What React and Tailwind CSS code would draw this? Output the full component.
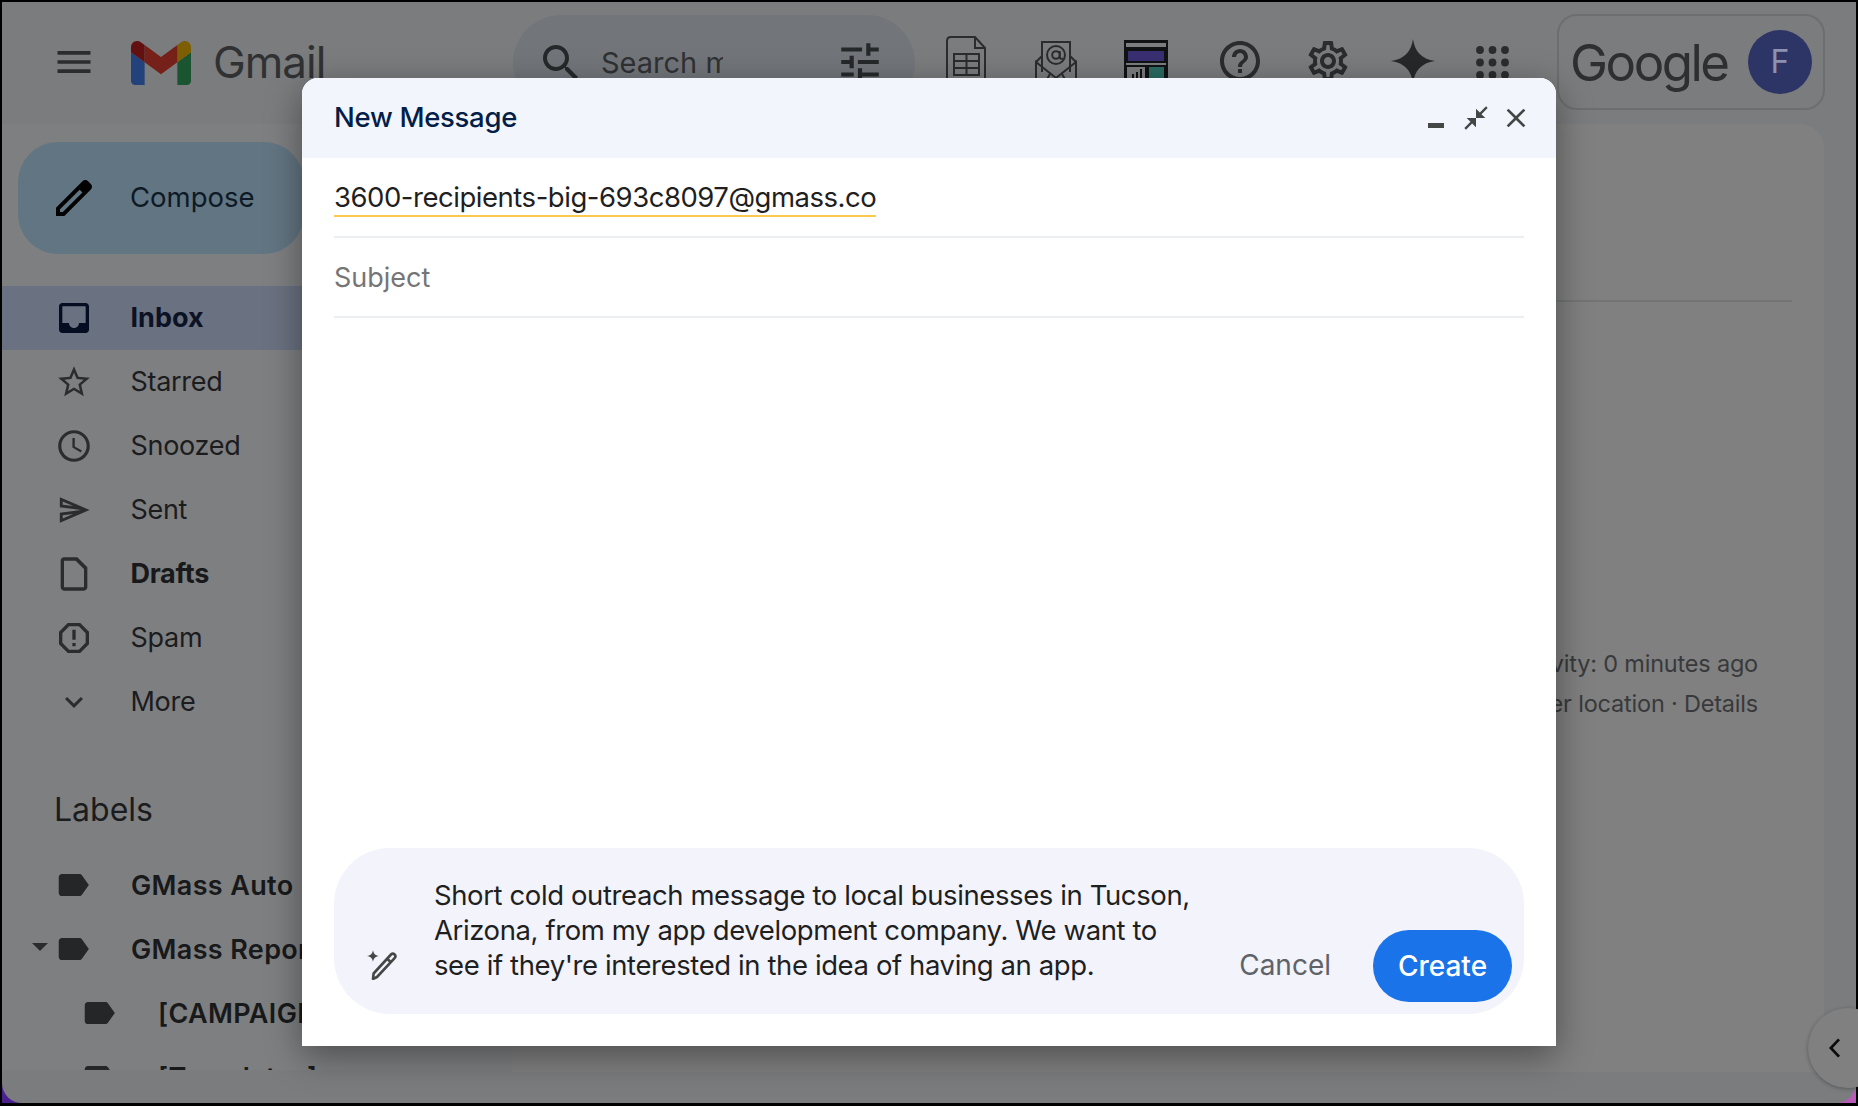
const P = {
  menu: "M3 18h18v-2H3v2zm0-5h18v-2H3v2zm0-7v2h18V6H3z",
  search: "M15.5 14h-.79l-.28-.27C15.41 12.59 16 11.11 16 9.5 16 5.91 13.09 3 9.5 3S3 5.91 3 9.5 5.91 16 9.5 16c1.61 0 3.09-.59 4.23-1.57l.27.28v.79l5 4.99L20.49 19l-4.99-5zm-6 0C7.01 14 5 11.99 5 9.5S7.01 5 9.5 5 14 7.01 14 9.5 11.99 14 9.5 14z",
  tune: "M3 17v2h6v-2H3zM3 5v2h10V5H3zm10 16v-2h8v-2h-8v-2h-2v6h2zM7 9v2H3v2h4v2h2V9H7zm14 4v-2H11v2h10zm-6-4h2V7h4V5h-4V3h-2v6z",
  help: "M11 18h2v-2h-2v2zm1-16C6.48 2 2 6.48 2 12s4.48 10 10 10 10-4.48 10-10S17.52 2 12 2zm0 18c-4.41 0-8-3.59-8-8s3.59-8 8-8 8 3.59 8 8-3.59 8-8 8zm0-14c-2.21 0-4 1.79-4 4h2c0-1.1.9-2 2-2s2 .9 2 2c0 2-3 1.75-3 5h2c0-2.25 3-2.5 3-5 0-2.21-1.79-4-4-4z",
  gear: "M19.43 12.98c.04-.32.07-.64.07-.98 0-.34-.03-.66-.07-.98l2.11-1.65c.19-.15.24-.42.12-.64l-2-3.46c-.09-.16-.26-.25-.44-.25-.06 0-.12.01-.17.03l-2.49 1c-.52-.4-1.08-.73-1.69-.98l-.38-2.65C14.46 2.18 14.25 2 14 2h-4c-.25 0-.46.18-.49.42l-.38 2.65c-.61.25-1.17.59-1.69.98l-2.49-1c-.06-.02-.12-.03-.18-.03-.17 0-.34.09-.43.25l-2 3.46c-.13.22-.07.49.12.64l2.11 1.65c-.04.32-.07.65-.07.98 0 .33.03.66.07.98l-2.11 1.65c-.19.15-.24.42-.12.64l2 3.46c.09.16.26.25.44.25.06 0 .12-.01.17-.03l2.49-1c.52.4 1.08.73 1.69.98l.38 2.65c.03.24.24.42.49.42h4c.25 0 .46-.18.49-.42l.38-2.65c.61-.25 1.17-.59 1.69-.98l2.49 1c.06.02.12.03.18.03.17 0 .34-.09.43-.25l2-3.46c.12-.22.07-.49-.12-.64l-2.11-1.65zm-1.98-1.71c.04.31.05.52.05.73 0 .21-.02.43-.05.73l-.14 1.13.89.7 1.08.84-.7 1.21-1.27-.51-1.04-.42-.9.68c-.43.32-.84.56-1.25.73l-1.06.43-.16 1.13-.2 1.35h-1.4l-.19-1.35-.16-1.13-1.06-.43c-.43-.18-.83-.41-1.23-.71l-.91-.7-1.06.43-1.27.51-.7-1.21 1.08-.84.89-.7-.14-1.13c-.03-.31-.05-.54-.05-.74s.02-.43.05-.73l.14-1.13-.89-.7-1.08-.84.7-1.21 1.27.51 1.04.42.9-.68c.43-.32.84-.56 1.25-.73l1.06-.43.16-1.13.2-1.35h1.39l.19 1.35.16 1.13 1.06.43c.43.18.83.41 1.23.71l.91.7 1.06-.43 1.27-.51.7 1.21-1.07.85-.89.7.14 1.13zM12 8c-2.21 0-4 1.79-4 4s1.79 4 4 4 4-1.79 4-4-1.79-4-4-4zm0 6c-1.1 0-2-.9-2-2s.9-2 2-2 2 .9 2 2-.9 2-2 2z",
  spark: "M12 0c.9 6.6 4.4 10.9 12 12-7.6 1.1-11.1 5.4-12 12-.9-6.6-4.4-10.9-12-12 7.6-1.1 11.1-5.4 12-12z",
  pen: "M20.41 4.94l-1.35-1.35c-.78-.78-2.05-.78-2.83 0L3 16.82V21h4.18L20.41 7.77c.79-.78.79-2.05 0-2.83zm-14 14.12L5 19v-1.36l9.82-9.82 1.41 1.41-9.82 9.83z",
  inbox: "M19 3H5c-1.1 0-2 .9-2 2v14c0 1.1.9 2 2 2h14c1.1 0 2-.9 2-2V5c0-1.1-.9-2-2-2zm0 12h-4c0 1.66-1.35 3-3 3s-3-1.34-3-3H4.99V5H19v10z",
  star: "M22 9.24l-7.19-.62L12 2 9.19 8.63 2 9.24l5.46 4.73L5.82 21 12 17.27 18.18 21l-1.63-7.03L22 9.24zM12 15.4l-3.76 2.27 1-4.28-3.32-2.88 4.38-.38L12 6.1l1.71 4.04 4.38.38-3.32 2.88 1 4.28L12 15.4z",
  clock: "M11.99 2C6.47 2 2 6.48 2 12s4.47 10 9.99 10C17.52 22 22 17.52 22 12S17.52 2 11.99 2zM12 20c-4.42 0-8-3.58-8-8s3.58-8 8-8 8 3.58 8 8-3.58 8-8 8zm.5-13H11v6l5.25 3.15.75-1.23-4.5-2.67z",
  send: "M4.01 6.03l7.51 3.22-7.52-1 .01-2.22m7.5 8.72L4 17.97v-2.22l7.51-1M2.01 3L2 10l15 2-15 2 .01 7L23 12 2.01 3z",
  draft: "M6 2c-1.1 0-2 .9-2 2v16c0 1.1.9 2 2 2h12c1.1 0 2-.9 2-2V8l-6-6H6zm0 18V4h7l5 5v11H6z",
  spam: "M15.73 3H8.27L3 8.27v7.46L8.27 21h7.46L21 15.73V8.27L15.73 3zM19 14.9L14.9 19H9.1L5 14.9V9.1L9.1 5h5.8L19 9.1v5.8zM11 7h2v6h-2zM11 15h2v2h-2z",
  more: "M7.41 8.59L12 13.17l4.59-4.58L18 10l-6 6-6-6 1.41-1.41z",
  label: "M17.63 5.84C17.27 5.33 16.67 5 16 5L5 5.01C3.9 5.01 3 5.9 3 7v10c0 1.1.9 1.99 2 1.99L16 19c.67 0 1.27-.33 1.63-.84L22 12l-4.37-6.16z",
  shrink: "M22 3.41l-5.29 5.29L20 12h-8V4l3.29 3.29L20.59 2 22 3.41zM3.41 22l5.29-5.29L12 20v-8H4l3.29 3.29L2 20.59 3.41 22z",
  close: "M19 6.41L17.59 5 12 10.59 6.41 5 5 6.41 10.59 12 5 17.59 6.41 19 12 13.41 17.59 19 19 17.59 13.41 12z",
};

function Ic({ d, className }) {
  return (
    <svg viewBox="0 0 24 24" fill="currentColor" className={className}>
      <path d={d} />
    </svg>
  );
}

function GmailLogo() {
  return (
    <svg viewBox="52 42 88 66" className="h-[44px] w-[60px]" preserveAspectRatio="none">
      <path fill="#21427a" d="M58 108h14V74L52 59v43c0 3.32 2.69 6 6 6" />
      <path fill="#1a5430" d="M120 108h14c3.32 0 6-2.69 6-6V59l-20 15" />
      <path fill="#7e5e02" d="M120 48v26l20-15v-8c0-7.42-8.47-11.65-14.4-7.2" />
      <path fill="#752119" d="M72 74V48l24 18 24-18v26L96 92" />
      <path fill="#621110" d="M52 51v8l20 15V48l-5.6-4.2c-5.94-4.45-14.4-.22-14.4 7.2" />
    </svg>
  );
}

function SheetIcon() {
  return (
    <svg viewBox="0 0 40 60" className="h-[60px] w-[40px]" fill="none" stroke="#2b2c2e" strokeWidth="2">
      <path d="M5 1h24l10 11v46H1V5q0-4 4-4z" />
      <path d="M29 1v11h10" />
      <path d="M8 18h25v21H8zM8 25h25M8 32h25M20.500 18v21" />
    </svg>
  );
}

function MailIcon() {
  return (
    <svg viewBox="0 0 44 60" className="h-[60px] w-[44px]" fill="none" stroke="#2b2c2e" strokeWidth="2">
      <path d="M8 15V2h28v13" />
      <circle cx="22" cy="15" r="9" />
      <circle cx="22" cy="15" r="3.800" />
      <path d="M25.800 11v6q0 2.500 3 1.500" />
      <path d="M2 22l6-6v16M42 22l-6-6v16M2 22v36h40V22L22 38z" />
      <path d="M2 58l14-24M42 58L28 34" />
    </svg>
  );
}

function DashIcon() {
  return (
    <svg viewBox="0 0 44 60" className="h-[60px] w-[44px]">
      <rect x="0" y="0" width="44" height="60" fill="#111214" />
      <rect x="2" y="3" width="40" height="4" fill="#7c7d7f" />
      <rect x="4" y="11" width="36" height="10" fill="#3a2f72" />
      <rect x="2" y="23" width="40" height="2" fill="#7c7d7f" />
      <rect x="3" y="27" width="18" height="33" fill="#7c7d7f" />
      <rect x="25" y="27" width="15" height="33" fill="#2a6a62" />
      <rect x="8" y="34" width="2" height="4" fill="#111214" />
      <rect x="12" y="32" width="2" height="6" fill="#111214" />
      <rect x="16" y="29" width="2" height="9" fill="#111214" />
    </svg>
  );
}

function Apps() {
  const dots = [4, 16.500, 29];
  return (
    <svg viewBox="0 0 33 33" className="h-[33px] w-[33px]" fill="#2b2c2e">
      {dots.map((y) => dots.map((x) => <circle key={x + "-" + y} cx={x} cy={y} r="3.900" />))}
    </svg>
  );
}

function Wand() {
  return (
    <svg viewBox="0 0 32 30" className="h-[30px] w-[32px]" fill="none">
      <path d="M7 0c.5 3.500 2 5.500 6 6-4 .5-5.500 2.500-6 6-.5-3.500-2-5.500-6-6 4-.5 5.500-2.500 6-6z" fill="#444746" />
      <path d="M7 29l.6-5.500L25 4.500q1.800-1.800 3.600 0 1.800 1.800 0 3.600L11 27z" stroke="#444746" strokeWidth="2.600" strokeLinejoin="round" />
      <path d="M21 8.500l4 4" stroke="#444746" strokeWidth="2.600" />
    </svg>
  );
}

const items = [
  ["Starred", P.star, "h-[38px] w-[38px]"],
  ["Snoozed", P.clock, "h-[38px] w-[38px]"],
  ["Sent", P.send, "h-[34px] w-[34px]"],
  ["Drafts", P.draft, "h-[40px] w-[40px]", true],
  ["Spam", P.spam, "h-[40px] w-[40px]"],
  ["More", P.more, "h-[36px] w-[36px]"],
];

function Row({ name, d, size, bold }) {
  return (
    <div className="flex h-16 items-center">
      <div className="flex w-[144px] shrink-0 justify-center text-[#2b2c2e]">
        <Ic d={d} className={size} />
      </div>
      <span className={"-ml-[15.500px] whitespace-nowrap text-[27px] tracking-[-0.3px] " + (bold ? "font-bold text-[#18191b]" : "text-[#1b1c1e]")}>{name}</span>
    </div>
  );
}

function LabelRow({ name, indent, caret }) {
  return (
    <div className="flex h-16 items-center whitespace-nowrap">
      <div className={"relative flex shrink-0 items-center " + (indent ? "w-[156px] pl-[78px]" : "w-[129px] pl-[52px]")}>
        {caret && <span className="absolute left-[30px] top-[13px] h-0 w-0 border-x-[8px] border-t-[8px] border-x-transparent border-t-[#2b2c2e]" />}
        <Ic d={P.label} className="h-[38px] w-[38px] text-[#252628]" />
      </div>
      <span className="pt-[2px] text-[27px] font-semibold tracking-[0.35px] text-[#18191b]">{name}</span>
    </div>
  );
}

export default function App() {
  return (
    <div className="relative h-[1106px] w-full overflow-hidden bg-black pb-[3px] pl-[2px] pr-[2px] pt-[2px] font-['Inter',sans-serif]">
      <div className="h-full w-full bg-[linear-gradient(to_right,#4a1f8f,#4a1f8f_50%,#b85cb8)]">
        <div className="flex h-full w-full flex-col overflow-hidden rounded-b-[20px] bg-[#7b7c7e]">
          {/* top bar */}
          <header className="flex h-[122px] shrink-0 items-center">
            <div className="ml-[50px] flex w-[44px] justify-center text-[#2b2c2e]">
              <Ic d={P.menu} className="-mt-[2px] h-[48px] w-[48px]" />
            </div>
            <div className="ml-[35px]">
              <GmailLogo />
            </div>
            <span className="-mt-[2px] ml-[22px] w-[113px] whitespace-nowrap text-[44px] tracking-[-1px] text-[#303133]">Gmail</span>
            <div className="ml-[187px] flex h-[96px] w-[402px] items-center rounded-[48px] bg-[#72767b] pl-[24px]">
              <Ic d={P.search} className="h-[48px] w-[48px] text-[#26282a]" />
              <span className="ml-[16px] w-[122px] overflow-hidden whitespace-nowrap text-[29px] text-[#303133]">Search mail</span>
            </div>
          </header>
          {/* body */}
          <div className="relative flex min-h-0 flex-1">
            <aside className="h-[946px] w-[510px] shrink-0 overflow-hidden bg-[#7e7f81]">
              <div className="ml-[16px] mt-[18px] flex h-[112px] w-[286px] items-center rounded-[40px] bg-[#627582] pl-[32px]">
                <Ic d={P.pen} className="h-[48px] w-[48px] text-black" />
                <span className="ml-[32px] text-[27.500px] text-[#0d1a26]">Compose</span>
              </div>
              <div className="mt-[32px] flex h-16 items-center bg-[#6a7180]">
                <div className="flex w-[144px] shrink-0 justify-center">
                  <Ic d={P.inbox} className="h-[40px] w-[40px] text-[#050d22]" />
                </div>
                <span className="-ml-[15.500px] text-[27px] font-bold text-[#0b1224]">Inbox</span>
              </div>
              {items.map(([n, d, s, b]) => (
                <Row key={n} name={n} d={d} size={s} bold={b} />
              ))}
              <div className="mt-[51px] h-[50px] pl-[52px] text-[32px] leading-[50px] text-[#1b1c1e]">Labels</div>
              <div className="mt-[18px]">
                <LabelRow name="GMass Auto" />
                <LabelRow name="GMass Reports" caret />
                <LabelRow name="[CAMPAIGNS]" indent />
                <LabelRow name="[Templates]" indent />
              </div>
            </aside>
            <main className="mb-[31px] mr-[32px] flex min-w-0 flex-1 flex-col rounded-t-[24px] bg-[#808080]">
              <div className="mr-[32px] mt-[176px] h-[2px] bg-[#737475]" />
              <div className="mr-[66px] mt-[342px] text-right text-[23.500px] leading-[40px] tracking-[-0.2px] text-[#38393b]">
                <p>Last account activity: 0 minutes ago</p>
                <p>Open in 1 other location · Details</p>
              </div>
            </main>
          </div>
        </div>
      </div>

      {/* icons of the top bar to the right of the search box */}
      <div className="absolute left-[835px] top-[36px] flex items-start">
        <Ic d={P.tune} className="mt-[1px] h-[50px] w-[50px] text-[#26282a]" />
        <div className="ml-[61px]"><SheetIcon /></div>
        <div className="ml-[48px] mt-[4px]"><MailIcon /></div>
        <div className="ml-[46px] mt-[4px]"><DashIcon /></div>
      </div>
      <Ic d={P.help} className="absolute left-[1216px] top-[37px] h-[48px] w-[48px] text-[#2b2c2e]" />
      <Ic d={P.gear} className="absolute left-[1304px] top-[37px] h-[48px] w-[48px] text-[#2b2c2e]" />
      <Ic d={P.spark} className="absolute left-[1391px] top-[39px] h-[44px] w-[44px] text-[#26282a]" />
      <div className="absolute left-[1476px] top-[46px]"><Apps /></div>
      <div className="absolute left-[1557px] top-[14px] flex h-[96px] w-[268px] items-center rounded-[20px] border-2 border-[#6d6e70] pl-[11px]">
        <span className="w-[162px] text-[51px] leading-none tracking-[-2.5px] text-[#2e2f31]">Google</span>
        <span className="ml-[16px] flex h-[64px] w-[64px] items-center justify-center rounded-full bg-[#2d3566] text-[32px] text-[#8d92b0]">F</span>
      </div>
      <div className="absolute left-[1808px] top-[1008px] flex h-[80px] w-[80px] items-center rounded-full bg-[#808080] pl-[20px] shadow-[0_1px_4px_rgba(0,0,0,0.3)]">
        <svg viewBox="0 0 14 22" className="h-[20px] w-[13px]" fill="none" stroke="#0c0c0c" strokeWidth="3"><path d="M12 1.500L3 11l9 9.500" /></svg>
      </div>

      {/* compose dialog */}
      <div className="absolute left-[302px] top-[78px] flex h-[968px] w-[1254px] flex-col overflow-hidden rounded-t-[16px] bg-white shadow-[0_10px_36px_rgba(0,0,0,0.4)]">
        <div className="relative flex h-[80px] shrink-0 items-center bg-[#f2f6fc] pl-[32px]">
          <span className="text-[27.500px] font-medium tracking-[-0.3px] text-[#041e49]">New Message</span>
          <span className="absolute left-[1126px] top-[45px] h-[5px] w-[16px] bg-[#444746]" />
          <Ic d={P.shrink} className="absolute left-[1160px] top-[26px] h-[28px] w-[28px] text-[#444746]" />
          <Ic d={P.close} className="absolute left-[1198px] top-[24px] h-[32px] w-[32px] text-[#444746]" />
        </div>
        <div className="mx-[32px] flex h-[80px] shrink-0 items-start border-b-2 border-[#eceff1]">
          <span className="mt-[19px] h-[40px] border-b-2 border-[#fbc94d] text-[27.500px] leading-[41px] tracking-[-0.47px] text-[#1f1f1f]">3600-recipients-big-693c8097@gmass.co</span>
        </div>
        <div className="mx-[32px] flex h-[80px] shrink-0 items-center border-b-2 border-[#eceff1] pt-[3px] text-[27px] text-[#757575]">Subject</div>
        <div className="flex-1" />
        <div className="mx-[32px] mb-[32px] flex h-[166px] shrink-0 rounded-[56px] bg-[#f2f3fb]">
          <div className="ml-[32px] mt-[102px] shrink-0"><Wand /></div>
          <p className="ml-[36px] mt-[30px] w-[770px] shrink-0 text-[27.500px] leading-[35px] tracking-[-0.4px] text-[#1f1f1f]">
            Short cold outreach message to local businesses in Tucson, Arizona, from my app development company. We want to see if they're interested in the idea of having an app.
          </p>
          <span className="ml-auto mt-[97px] text-[28px] leading-[41px] text-[#5f6368]">Cancel</span>
          <span className="ml-[42px] mr-[12px] mt-[82px] flex h-[72px] w-[139px] items-center justify-center rounded-[36px] bg-[#1a73e8] text-[28px] font-medium text-white">Create</span>
        </div>
      </div>
    </div>
  );
}
